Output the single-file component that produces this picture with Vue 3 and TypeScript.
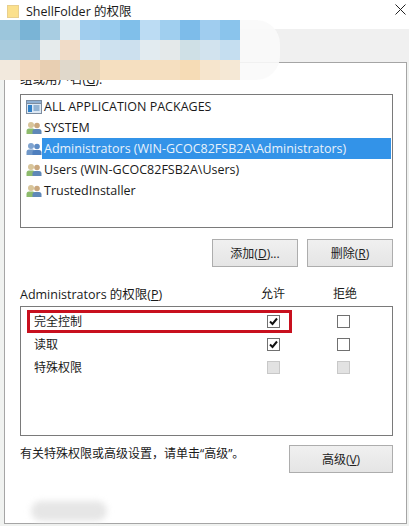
<script setup lang="ts">
const mosaic: string[] = [
  '#9cc6dc','#7ab4d6','#a8cde2','#e2ecf1','#a0cdee','#97cbee','#80bfea','#bcdcf3','#a0cfef','#7dbcea','#a0cdef','#8ac4ec',
  '#a8cbdd','#a8c8db','#e6ebec','#f0dcc8','#dde9f1','#cde1ef','#cce0ee','#e2ebf0','#e4e9ea','#cfe0e6','#d2e3ee','#c5def0',
  '#f2e9dd','#f2d9bf','#e8cfb2','#e0d8cb','#e8d5b8','#f5dfc0','#f5dfc0','#f5dfc0','#f5dfc0','#f6dcb6','#f6e5cd','#f5e8d5',
]
const principals = [
  { name: 'ALL APPLICATION PACKAGES', kind: 'pkg', selected: false },
  { name: 'SYSTEM', kind: 'user', selected: false },
  { name: 'Administrators (WIN-GCOC82FSB2A\\Administrators)', kind: 'user', selected: true },
  { name: 'Users (WIN-GCOC82FSB2A\\Users)', kind: 'user', selected: false },
  { name: 'TrustedInstaller', kind: 'user', selected: false },
]
const perms = [
  { name: '完全控制', allow: true, disabled: false, marked: true },
  { name: '读取', allow: true, disabled: false, marked: false },
  { name: '特殊权限', allow: false, disabled: true, marked: false },
]
</script>

<template>
  <div class="window">
    <header class="titlebar">
      <svg class="folder" width="12" height="13" viewBox="0 0 12 13">
        <rect x="0.5" y="0.5" width="11" height="12" fill="#fbe08c" stroke="#e8cf8e" />
      </svg>
      <span class="title">ShellFolder 的权限</span>
      <svg class="close" width="11" height="11" viewBox="0 0 11 11">
        <path d="M0.5 0.5 L10.5 10.5 M10.5 0.5 L0.5 10.5" stroke="#222" stroke-width="1" fill="none" />
      </svg>
    </header>
    <div class="tabstrip"></div>
    <main class="panel">
      <div class="group-label">组或用户名(<u>G</u>):</div>
      <ul class="list">
        <li v-for="p in principals" :key="p.name" class="list-row">
          <svg v-if="p.kind === 'pkg'" class="ico" width="16" height="16" viewBox="0 0 16 16">
            <rect x="0.5" y="1.5" width="15" height="13" fill="#dce8f4" stroke="#7d8da0" />
            <rect x="0.5" y="1.5" width="15" height="3" fill="#8fb0d2" stroke="#7d8da0" />
            <rect x="2" y="6" width="4" height="7" fill="#2f80c8" />
            <path d="M7.5 7h6M7.5 9h6M7.5 11h6" stroke="#4b7fb0" stroke-width="1" />
          </svg>
          <svg v-else class="ico" width="16" height="16" viewBox="0 0 16 16">
            <circle cx="5" cy="5" r="3" :fill="p.selected ? '#7fa3cf' : '#d8c59a'" />
            <path d="M0.5 14 V11 Q0.5 8.5 3 8.5 H7 Q9 8.5 9 11 V14 Z" :fill="p.selected ? '#6f97c8' : '#8dbb6c'" />
            <circle cx="11" cy="5.5" r="2.8" :fill="p.selected ? '#5f8cc4' : '#c9a77e'" />
            <path d="M6.5 14 V11.5 Q6.5 9 9 9 H13 Q15.5 9 15.5 11.5 V14 Z" :fill="p.selected ? '#4f7fbe' : '#5f88b8'" />
          </svg>
          <span class="row-text" :class="{ selected: p.selected }">{{ p.name }}</span>
        </li>
      </ul>
      <div class="actions">
        <button class="btn">添加(<u>D</u>)...</button>
        <button class="btn">删除(<u>R</u>)</button>
      </div>
      <div class="perm-head">
        <span class="perm-title">Administrators 的权限(<u>P</u>)</span>
        <span class="col">允许</span>
        <span class="col">拒绝</span>
      </div>
      <div class="perm-box">
        <div v-for="r in perms" :key="r.name" class="perm-row">
          <div class="perm-main" :class="{ marked: r.marked }">
            <span class="perm-name">{{ r.name }}</span>
            <span class="check" :class="{ off: r.disabled }">
              <svg v-if="r.allow" width="11" height="11" viewBox="0 0 11 11">
                <path d="M2 5.5 L4.5 8 L9 2.5" stroke="#111" stroke-width="2" fill="none" />
              </svg>
            </span>
          </div>
          <span class="check deny" :class="{ off: r.disabled }"></span>
        </div>
      </div>
      <div class="footer">
        <span class="hint">有关特殊权限或高级设置，请单击“高级”。</span>
        <button class="btn btn-wide">高级(<u>V</u>)</button>
      </div>
      <div class="smudge"></div>
    </main>
    <div class="mosaic">
      <i v-for="(c, i) in mosaic" :key="i" :style="{ background: c }"></i>
    </div>
  </div>
</template>

<style>
html, body { margin: 0; padding: 0; }
</style>

<style scoped>
.window {
  position: relative;
  width: 409px;
  height: 526px;
  overflow: hidden;
  display: flex;
  flex-direction: column;
  background: #f0f2f0;
  font-family: "Open Sans", "Noto Sans CJK SC", sans-serif;
  font-size: 12.5px;
  color: #1a1a1a;
}
.titlebar {
  height: 29px;
  flex: none;
  background: #fff;
  display: flex;
  align-items: flex-start;
  padding: 5px 3px 0 7px;
  box-sizing: border-box;
}
.folder { flex: none; }
.title { margin-left: 7px; line-height: 14px; flex: 1; }
.close { margin-top: -1px; }
.tabstrip { height: 33px; flex: none; background: #f0f0f0; }
.panel {
  position: relative;
  flex: 1;
  margin: 0 2px 2px 4px;
  padding: 0 13px 0 15px;
  background: #fff;
  border: 1px solid #a5a5a5;
  display: flex;
  flex-direction: column;
}
.group-label { margin-top: 9px; height: 22px; line-height: 16px; }
.list {
  list-style: none;
  margin: 0;
  height: 134px;
  box-sizing: border-box;
  border: 1px solid #7a7a7a;
  padding: 1px 1px 0 5px;
}
.list-row { display: flex; align-items: center; height: 21px; }
.ico { flex: none; }
.row-text { flex: 1; height: 21px; line-height: 21px; padding-left: 2px; white-space: nowrap; }
.row-text.selected { background: #3393e8; color: #e8f2fb; }
.actions { display: flex; justify-content: flex-end; gap: 9px; margin-top: 11px; }
.btn {
  width: 86px;
  height: 28px;
  padding: 0;
  background: linear-gradient(#f0f0f0, #e5e5e5);
  border: 1px solid #adadad;
  font: inherit;
  font-size: 12px;
  color: #222;
}
.btn-wide { width: 104px; flex: none; }
.perm-head { display: flex; align-items: center; margin-top: 16px; height: 20px; }
.perm-title { flex: 1; }
.col { width: 72px; text-align: center; font-size: 12px; }
.perm-head .col:last-child { margin-right: 12px; }
.perm-box {
  height: 130px;
  box-sizing: border-box;
  margin-top: 3px;
  border: 1px solid #7a7a7a;
  padding: 3px 6px 0;
  font-size: 12px;
}
.perm-row { display: flex; align-items: center; height: 23px; }
.perm-main {
  flex: none;
  width: 265px;
  height: 23px;
  box-sizing: border-box;
  display: flex;
  align-items: center;
  padding-left: 4px;
  border: 3px solid transparent;
}
.perm-main.marked { border-color: #c8101e; }
.perm-name { width: 233px; flex: none; line-height: 15px; margin-top: -1px; }
.check {
  flex: none;
  width: 13px;
  height: 13px;
  box-sizing: border-box;
  border: 1px solid #707070;
  background: #fff;
  display: flex;
  align-items: center;
  justify-content: center;
}
.check.deny { margin-left: 45px; }
.check.off { background: #e2e2e2; border-color: #c8c8c8; }
.footer { display: flex; justify-content: space-between; align-items: flex-start; margin-top: 9px; }
.hint { line-height: 16px; font-size: 12px; margin-top: 1px; }
.smudge {
  position: absolute;
  left: 26px;
  top: 438px;
  width: 76px;
  height: 20px;
  border-radius: 10px;
  background: #e6e6e6;
  filter: blur(3px);
}
.mosaic {
  position: absolute;
  left: 0;
  top: 20px;
  width: 280px;
  height: 60px;
  display: grid;
  grid-template-columns: repeat(12, 20px);
  grid-auto-rows: 20px;
  background: rgba(250, 250, 250, 0.9);
  border-radius: 0 24px 24px 0;
}
.mosaic i { display: block; }
</style>
